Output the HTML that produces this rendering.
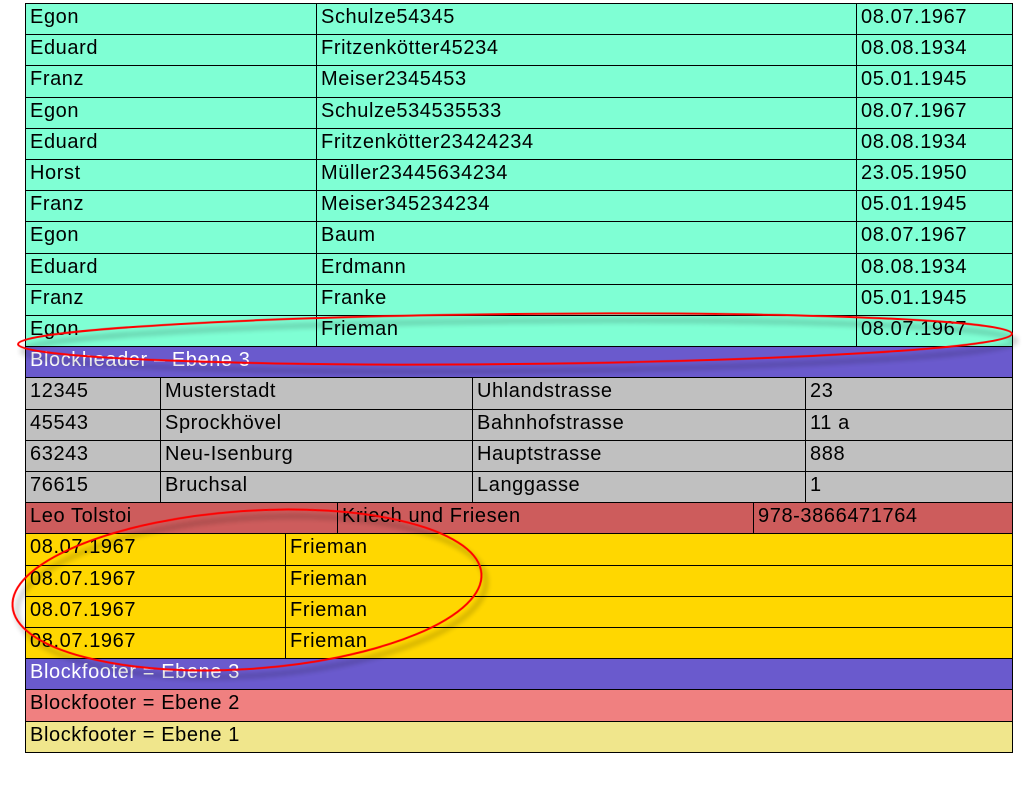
<!DOCTYPE html>
<html><head><meta charset="utf-8"><style>
body{margin:0;width:1034px;height:807px;background:#fff;position:relative;overflow:hidden;font-family:"Liberation Sans",Arial,sans-serif;font-size:20px;letter-spacing:0.6px}
.c{position:absolute;box-sizing:border-box;border:1px solid #000;padding-left:4px;line-height:27px;white-space:nowrap;overflow:hidden}
svg{position:absolute;left:0;top:0}
</style></head><body>
<div id="t"></div>
<script>
var ys=[];for(var i=0;i<=24;i++)ys.push(Math.round(3+31.2*i));
var rows=[
["#7FFFD4",[25,316,856,1012],["Egon","Schulze54345","08.07.1967"]],
["#7FFFD4",[25,316,856,1012],["Eduard","Fritzenkötter45234","08.08.1934"]],
["#7FFFD4",[25,316,856,1012],["Franz","Meiser2345453","05.01.1945"]],
["#7FFFD4",[25,316,856,1012],["Egon","Schulze534535533","08.07.1967"]],
["#7FFFD4",[25,316,856,1012],["Eduard","Fritzenkötter23424234","08.08.1934"]],
["#7FFFD4",[25,316,856,1012],["Horst","Müller23445634234","23.05.1950"]],
["#7FFFD4",[25,316,856,1012],["Franz","Meiser345234234","05.01.1945"]],
["#7FFFD4",[25,316,856,1012],["Egon","Baum","08.07.1967"]],
["#7FFFD4",[25,316,856,1012],["Eduard","Erdmann","08.08.1934"]],
["#7FFFD4",[25,316,856,1012],["Franz","Franke","05.01.1945"]],
["#7FFFD4",[25,316,856,1012],["Egon","Frieman","08.07.1967"]],
["#6A5ACD",[25,1012],["Blockheader – Ebene 3"],"#fff"],
["#C0C0C0",[25,160,472,805,1012],["12345","Musterstadt","Uhlandstrasse","23"]],
["#C0C0C0",[25,160,472,805,1012],["45543","Sprockhövel","Bahnhofstrasse","11 a"]],
["#C0C0C0",[25,160,472,805,1012],["63243","Neu-Isenburg","Hauptstrasse","888"]],
["#C0C0C0",[25,160,472,805,1012],["76615","Bruchsal","Langgasse","1"]],
["#CD5C5C",[25,337,753,1012],["Leo Tolstoi","Kriech und Friesen","978-3866471764"]],
["#FFD700",[25,285,1012],["08.07.1967","Frieman"]],
["#FFD700",[25,285,1012],["08.07.1967","Frieman"]],
["#FFD700",[25,285,1012],["08.07.1967","Frieman"]],
["#FFD700",[25,285,1012],["08.07.1967","Frieman"]],
["#6A5ACD",[25,1012],["Blockfooter = Ebene 3"],"#fff"],
["#F08080",[25,1012],["Blockfooter = Ebene 2"]],
["#F0E68C",[25,1012],["Blockfooter = Ebene 1"]]];
var h="";
rows.forEach(function(r,i){var t=ys[i],b=ys[i+1];for(var j=0;j<r[1].length-1;j++){h+='<div class="c" style="left:'+r[1][j]+'px;top:'+t+'px;width:'+(r[1][j+1]-r[1][j]+1)+'px;height:'+(b-t+1)+'px;background:'+r[0]+';color:'+(r[3]||'#000')+'">'+r[2][j]+'</div>';}});
document.getElementById('t').innerHTML=h;
</script>
<svg width="1034" height="807"><defs><filter id="s" x="-10%" y="-50%" width="120%" height="200%"><feGaussianBlur in="SourceAlpha" stdDeviation="3"/><feOffset dx="4" dy="7"/><feComponentTransfer><feFuncA type="linear" slope="0.45"/></feComponentTransfer><feMerge><feMergeNode/><feMergeNode in="SourceGraphic"/></feMerge></filter></defs>
<ellipse cx="515" cy="339" rx="497" ry="25" transform="rotate(-0.6 515 339)" fill="none" stroke="#f00" stroke-width="2" filter="url(#s)"/>
<ellipse cx="247" cy="590" rx="235" ry="79" transform="rotate(-4 247 590)" fill="none" stroke="#f00" stroke-width="2" filter="url(#s)"/>
</svg>
</body></html>
